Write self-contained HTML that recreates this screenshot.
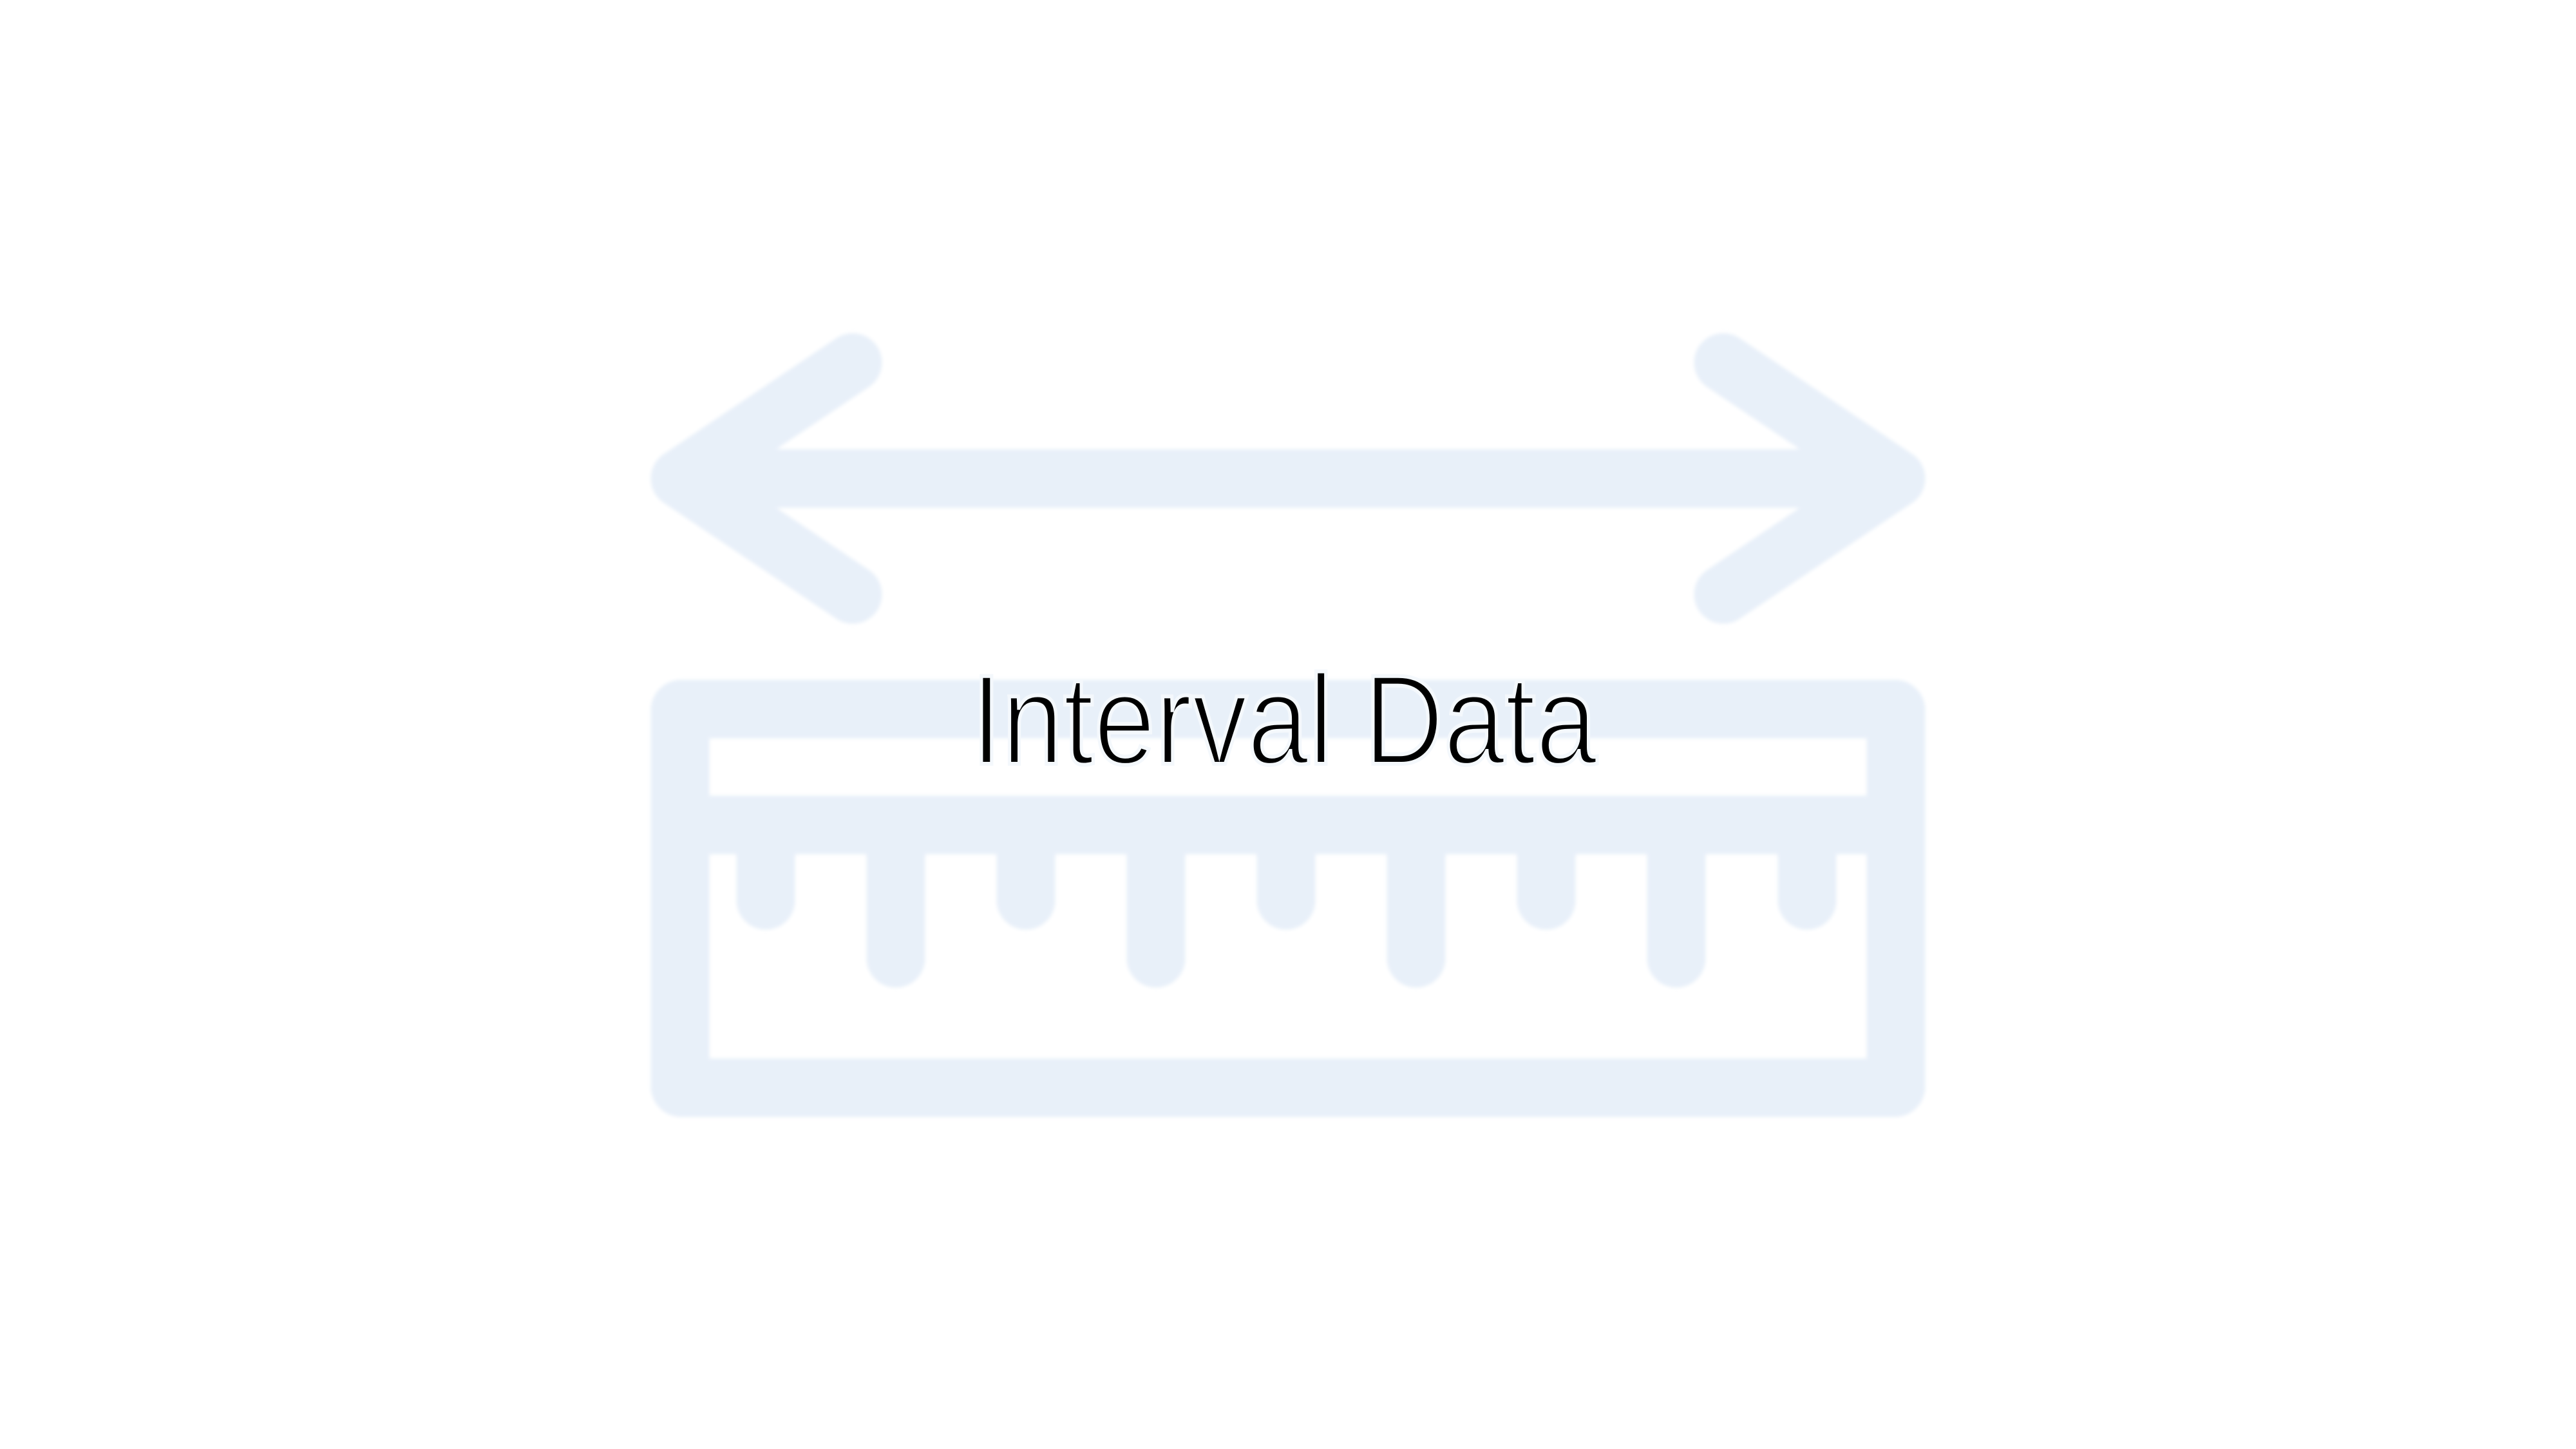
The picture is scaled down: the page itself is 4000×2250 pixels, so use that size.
<!DOCTYPE html>
<html><head><meta charset="utf-8"><style>
html,body{margin:0;padding:0;background:#fff;width:4000px;height:2250px;overflow:hidden}
svg{display:block}
</style></head><body>
<svg width="4000" height="2250" viewBox="0 0 4000 2250" xmlns="http://www.w3.org/2000/svg">
<defs><filter id="b" x="-10%" y="-10%" width="120%" height="120%"><feGaussianBlur stdDeviation="3"/></filter></defs>
<g fill="none" stroke="#e8f0f9" stroke-width="91" stroke-linecap="round" stroke-linejoin="round" filter="url(#b)">
<path d="M1324 563 L1056 743 L1324 923 M1056 743 H2944 M2676 563 L2944 743 L2676 923"/>
<rect x="1056" y="1101" width="1888" height="588" rx="2"/>
<path d="M1056 1281 H2944"/>
<path d="M1189 1281 V1398 M1391 1281 V1488 M1593 1281 V1398 M1795 1281 V1488 M1997 1281 V1398 M2199 1281 V1488 M2401 1281 V1398 M2603 1281 V1488 M2806 1281 V1398"/>
</g>
<text x="1508" y="1186" font-family="Liberation Sans, sans-serif" font-size="198" fill="#000" stroke="#f4f8fc" stroke-width="6" textLength="972" lengthAdjust="spacingAndGlyphs">Interval Data</text>
</svg>
</body></html>
